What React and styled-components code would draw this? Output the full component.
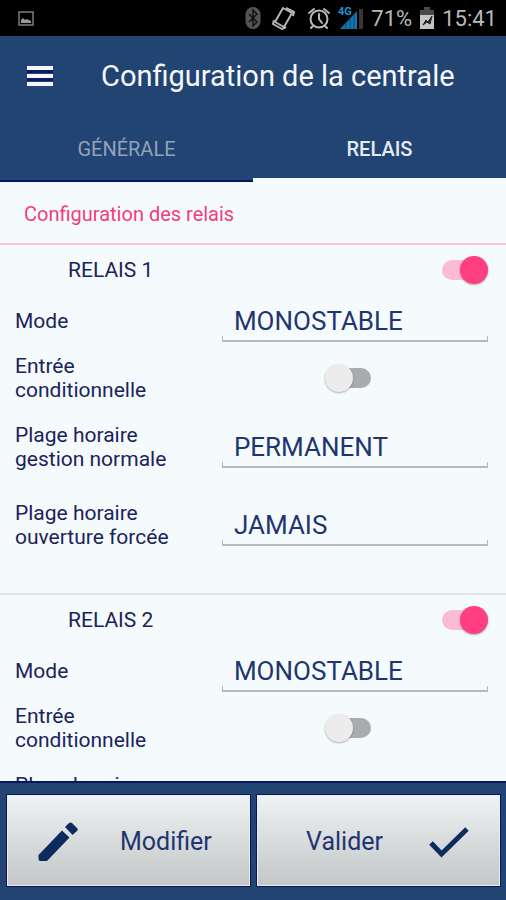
import React, { useState } from "react";
import styled, { createGlobalStyle } from "styled-components";

const GlobalStyle = createGlobalStyle`
  * {
    box-sizing: border-box;
  }
  body {
    margin: 0;
    font-family: Roboto, "Liberation Sans", sans-serif;
    color: #1b2459;
    background: #f5fafd;
  }
  button, select {
    font-family: inherit;
  }
`;

const Screen = styled.div`
  height: 100vh;
  display: flex;
  flex-direction: column;
`;

const StatusBar = styled.div`
  flex: none;
  height: 36px;
  padding: 0 9px 0 18px;
  display: flex;
  align-items: center;
  gap: 7px;
  background: #000;
  color: #b9b9b9;
  font-size: 22px;
`;

const Spacer = styled.div`
  flex: 1;
`;

const Header = styled.header`
  flex: none;
  background: #224472;
  border-bottom: 2px solid #0a1560;
`;

const AppBar = styled.div`
  height: 80px;
  padding: 0 27px;
  display: flex;
  align-items: center;
  gap: 48px;
`;

const MenuButton = styled.button`
  display: flex;
  padding: 0;
  border: none;
  background: none;
`;

const Title = styled.h1`
  margin: 0;
  font-size: 29px;
  font-weight: 400;
  white-space: nowrap;
  color: #f4f8fc;
`;

const Tabs = styled.div`
  display: flex;
  margin-bottom: -2px;
`;

const Tab = styled.button`
  flex: 1;
  height: 66px;
  padding: 4px 0 0;
  border: none;
  border-bottom: 4px solid ${(props) => (props.$active ? "#f5fafd" : "transparent")};
  background: none;
  font-size: 20px;
  font-weight: ${(props) => (props.$active ? 500 : 400)};
  color: ${(props) => (props.$active ? "#e6eaf4" : "#92a3bb")};
`;

const Content = styled.main`
  flex: 1;
  min-height: 0;
  overflow-y: auto;
  scrollbar-width: none;
`;

const SectionTitle = styled.h2`
  margin: 0;
  height: 63px;
  padding: 0 24px;
  border-bottom: 2px solid #f9c6d5;
  font-size: 20px;
  font-weight: 400;
  line-height: 64px;
  color: #f23d7c;
`;

const Relay = styled.section`
  padding: 0 18px 29px 15px;
  border-bottom: 2px solid #dfe4e8;
`;

const RelayHeader = styled.div`
  height: 50px;
  padding-left: 53px;
  display: flex;
  align-items: center;
  justify-content: space-between;
  font-size: 21px;
`;

const Row = styled.div`
  display: grid;
  grid-template-columns: 41% 1fr;
  align-items: center;
  height: ${(props) => props.$height}px;
`;

const Label = styled.label`
  font-size: 21px;
  line-height: 24px;
  white-space: pre-line;
`;

const Select = styled.select`
  appearance: none;
  height: 42px;
  margin-left: 13px;
  padding: 0 12px;
  border: none;
  border-radius: 0;
  font-size: 26px;
  color: #1f3570;
  background:
    linear-gradient(#b7babd, #b7babd) left bottom / 100% 2px no-repeat,
    linear-gradient(#b7babd, #b7babd) left bottom / 1px 6px no-repeat,
    linear-gradient(#b7babd, #b7babd) right bottom / 1px 6px no-repeat;
`;

const Switch = styled.input`
  appearance: none;
  position: relative;
  justify-self: center;
  width: 46px;
  height: 28px;
  margin: 0;

  &::before {
    content: "";
    position: absolute;
    inset: 4px 0;
    border-radius: 10px;
    background: #a9abae;
  }
  &::after {
    content: "";
    position: absolute;
    top: 0;
    left: 0;
    width: 28px;
    height: 28px;
    border-radius: 50%;
    background: #ececec;
    box-shadow: 0 1px 2px rgba(0, 0, 0, 0.3);
  }
  &:checked::before {
    background: #fbbbd3;
  }
  &:checked::after {
    left: 18px;
    background: #ff3f80;
  }
`;

const Footer = styled.footer`
  flex: none;
  display: flex;
  gap: 7px;
  padding: 12px 6px 14px 7px;
  border-top: 2px solid #0a1560;
  background: #224472;
`;

const FooterButton = styled.button`
  flex: 1;
  height: 91px;
  padding: 2px 30px 0;
  display: flex;
  align-items: center;
  justify-content: ${(props) => (props.$end ? "flex-end" : "flex-start")};
  gap: ${(props) => (props.$end ? 46 : 42)}px;
  border: 1px solid #e9eef0;
  background: linear-gradient(#edf2f2, #c4c6c7);
  outline: 1px solid #0a1560;
  font-size: 25px;
  color: #1f3570;
`;

const PictureIcon = () => (
  <svg width="16" height="15" viewBox="0 0 16 15">
    <rect x="1" y="1" width="14" height="13" fill="none" stroke="#858585" strokeWidth="1.4" />
    <path d="M3 12V9l2-2 2 2 1.500-1 4.500 2v2z" fill="#999" />
  </svg>
);

const BluetoothIcon = () => (
  <svg width="16" height="24" viewBox="0 0 16 24">
    <rect x="0.500" y="1" width="15" height="22" rx="7.500" fill="#555" />
    <path d="M4 8l8 8-4 4V4l4 4-8 8" fill="none" stroke="#111" strokeWidth="1.500" />
  </svg>
);

const RotateIcon = () => (
  <svg width="32" height="26" viewBox="0 0 32 26">
    <g fill="none" stroke="#b5b5b5" strokeLinejoin="round">
      <path d="M15 3l9 5-8 14-9-5z" strokeWidth="2" />
      <path d="M18 3l8 4-1 4M6 15l-1 4 9 5 4-2" strokeWidth="2" />
    </g>
  </svg>
);

const AlarmIcon = () => (
  <svg width="24" height="24" viewBox="0 0 24 24">
    <g fill="none" stroke="#b9b9b9" strokeWidth="2" strokeLinecap="round">
      <circle cx="12" cy="13" r="8.500" />
      <path d="M12 8v5l3 4M2 7l5-4M22 7l-5-4M6 20l-2 2M18 20l2 2" />
    </g>
  </svg>
);

const SignalIcon = () => (
  <svg width="26" height="26" viewBox="0 0 26 26">
    <path d="M2 24L19 6v18z" fill="#0f76ae" />
    <path d="M8 17v7M12 13v11M16 9v15" stroke="#0a4a70" />
    <path d="M21 4h4v20h-4z" fill="#3b3431" />
    <text x="0" y="10" fontSize="11" fontWeight="700" fill="#1993cf">4G</text>
  </svg>
);

const BatteryIcon = () => (
  <svg width="16" height="24" viewBox="0 0 16 24">
    <path d="M5 1h6v3h4v7H1V4h4z" fill="#494949" />
    <path d="M1 9h14v14H1z" fill="#c4c4c4" />
    <path d="M4 19l3-5 2 2 4-6-2 8-3-2z" fill="#222" stroke="#222" />
  </svg>
);

const MenuIcon = () => (
  <svg width="26" height="20" viewBox="0 0 26 20">
    <path d="M0 4h26v3H0zM0 12h26v3H0z" fill="#10185f" />
    <path d="M0 0h26v4H0zM0 8h26v4H0zM0 16h26v4H0z" fill="#f3f6fb" />
  </svg>
);

const PencilIcon = () => (
  <svg width="40" height="40" viewBox="0 0 40 40">
    <path
      d="M0.500 33L24 8.500l7.500 7L9 39H2.500Q0.500 39 0.500 37zM27 5l4-4q1.500-1 3 0l5 5q1.500 1.500 0 3l-4.500 4z"
      fill="#0c2c60"
    />
  </svg>
);

const CheckIcon = () => (
  <svg width="40" height="34" viewBox="0 0 40 34">
    <path d="M2 18l10.500 11L38 4" fill="none" stroke="#0c2c60" strokeWidth="5" />
  </svg>
);

const modes = ["MONOSTABLE", "BISTABLE"];
const ranges = ["PERMANENT", "JAMAIS"];

const RelayForm = ({ number }) => {
  const [relay, setRelay] = useState({
    enabled: true,
    mode: "MONOSTABLE",
    conditional: false,
    normal: "PERMANENT",
    forced: "JAMAIS",
  });
  const id = (name) => `relay-${number}-${name}`;
  const update = (name, value) => setRelay({ ...relay, [name]: value });

  const renderSelect = (name, label, options, height) => (
    <Row $height={height}>
      <Label htmlFor={id(name)}>{label}</Label>
      <Select
        id={id(name)}
        value={relay[name]}
        onChange={(e) => update(name, e.target.value)}
      >
        {options.map((option) => (
          <option key={option}>{option}</option>
        ))}
      </Select>
    </Row>
  );

  return (
    <Relay>
      <RelayHeader>
        <label htmlFor={id("enabled")}>RELAIS {number}</label>
        <Switch
          type="checkbox"
          id={id("enabled")}
          checked={relay.enabled}
          onChange={(e) => update("enabled", e.target.checked)}
        />
      </RelayHeader>
      {renderSelect("mode", "Mode", modes, 52)}
      <Row $height={61}>
        <Label htmlFor={id("conditional")}>{"Entrée\nconditionnelle"}</Label>
        <Switch
          type="checkbox"
          id={id("conditional")}
          checked={relay.conditional}
          onChange={(e) => update("conditional", e.target.checked)}
        />
      </Row>
      {renderSelect("normal", "Plage horaire\ngestion normale", ranges, 78)}
      {renderSelect("forced", "Plage horaire\nouverture forcée", ranges, 78)}
    </Relay>
  );
};

const App = () => {
  const [tab, setTab] = useState("RELAIS");

  return (
    <Screen>
      <GlobalStyle />
      <StatusBar>
        <PictureIcon />
        <Spacer />
        <BluetoothIcon />
        <RotateIcon />
        <AlarmIcon />
        <SignalIcon />
        <span>71%</span>
        <BatteryIcon />
        <span>15:41</span>
      </StatusBar>
      <Header>
        <AppBar>
          <MenuButton aria-label="Menu">
            <MenuIcon />
          </MenuButton>
          <Title>Configuration de la centrale</Title>
        </AppBar>
        <Tabs role="tablist">
          {["GÉNÉRALE", "RELAIS"].map((name) => (
            <Tab
              key={name}
              role="tab"
              aria-selected={tab === name}
              $active={tab === name}
              onClick={() => setTab(name)}
            >
              {name}
            </Tab>
          ))}
        </Tabs>
      </Header>
      <Content>
        <SectionTitle>Configuration des relais</SectionTitle>
        <RelayForm number={1} />
        <RelayForm number={2} />
      </Content>
      <Footer>
        <FooterButton>
          <PencilIcon />
          Modifier
        </FooterButton>
        <FooterButton $end>
          Valider
          <CheckIcon />
        </FooterButton>
      </Footer>
    </Screen>
  );
};

export default App;
